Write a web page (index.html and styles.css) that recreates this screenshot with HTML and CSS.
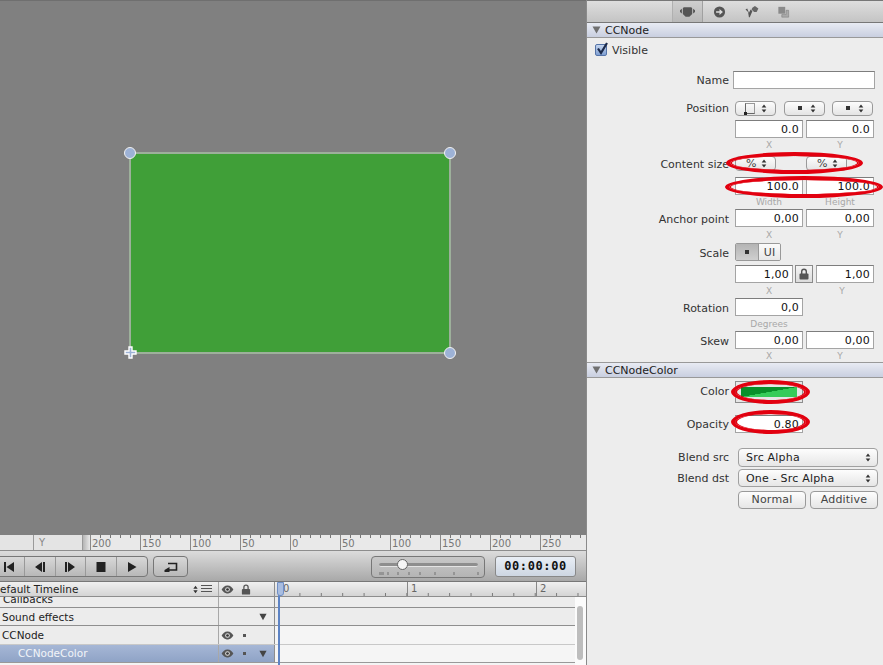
FILE: index.html
```html
<!DOCTYPE html>
<html lang="en">
<head>
<meta charset="utf-8">
<title>CCNodeColor</title>
<link rel="stylesheet" href="styles.css">
</head>
<body>
<svg class="defs" width="0" height="0" aria-hidden="true">
  <symbol id="updown" viewBox="0 0 6 10"><path d="M3 0.5 5.6 4H0.4zM3 9.5 0.4 6h5.2z" fill="#333"/></symbol>
  <symbol id="eye" viewBox="0 0 14 10"><path d="M0.5 5C3 1.2 5 .6 7 .6S11 1.2 13.5 5C11 8.8 9 9.4 7 9.4S3 8.8.5 5z" fill="#555"/><circle cx="7" cy="5" r="2.6" fill="#ddd"/><circle cx="7" cy="5" r="1.5" fill="#333"/></symbol>
  <symbol id="lock" viewBox="0 0 10 12"><path d="M2 6V3.6a3 3 0 0 1 6 0V6H6.6V3.6a1.6 1.6 0 0 0-3.2 0V6z" fill="#555"/><rect x="0.5" y="5.5" width="9" height="6" rx="1" fill="#555"/></symbol>
  <symbol id="tri" viewBox="0 0 10 9"><path d="M0.5 0.5h9L5 8.5z" fill="currentColor"/></symbol>
</svg>
<div class="app">
  <main class="left">
    <section class="canvas">
      <div class="node">
        <span class="handle tl"></span>
        <span class="handle tr"></span>
        <span class="handle br"></span>
        <svg class="handle-move" viewBox="0 0 13 13"><path d="M5 1h3v4h4v3H8v4H5V8H1V5h4z" fill="#9db2d6" stroke="#fff" stroke-width="1.4"/></svg>
      </div>
    </section>

    <div class="ruler">
      <div class="ruler-lead"></div>
      <div class="ruler-y">Y</div>
      <div class="ruler-shade"></div>
      <div class="ruler-cell">200</div>
      <div class="ruler-cell">150</div>
      <div class="ruler-cell">100</div>
      <div class="ruler-cell">50</div>
      <div class="ruler-cell">0</div>
      <div class="ruler-cell">50</div>
      <div class="ruler-cell">100</div>
      <div class="ruler-cell">150</div>
      <div class="ruler-cell">200</div>
      <div class="ruler-cell">250</div>
    </div>

    <div class="transport">
      <div class="btn-group">
        <button class="tbtn first"><svg viewBox="0 0 12 10" class="ti"><path d="M1 0h2v10H1zM11 0v10L3.500 5z"/></svg></button>
        <button class="tbtn"><svg viewBox="0 0 12 10" class="ti"><path d="M9 0h2v10H9zM8 0v10L1 5z"/></svg></button>
        <button class="tbtn"><svg viewBox="0 0 12 10" class="ti"><path d="M1 0h2v10H1zM4 0v10L11 5z"/></svg></button>
        <button class="tbtn"><svg viewBox="0 0 12 10" class="ti"><path d="M1.500 0h9v10h-9z"/></svg></button>
        <button class="tbtn last"><svg viewBox="0 0 12 10" class="ti"><path d="M2 0v10l8.500-5z"/></svg></button>
      </div>
      <button class="loop"><svg viewBox="0 0 14 10" class="loop-icon"><path d="M4 1.500h8.500V8H5" fill="none" stroke="#222" stroke-width="1.600"/><path d="M0.500 8 5.500 5v5.500H.5z" fill="#222"/></svg></button>
      <div class="slider">
        <div class="slider-track"></div>
        <div class="slider-knob"></div>
        <svg class="slider-ticks" viewBox="0 0 100 4"><path d="M0 0v3M2 0v3M4 0v3M9 0v3M19 0v3M30 0v3M41 0v3M56 0v3M75 0v3M99 0v3" stroke="#555" stroke-width=".7"/></svg>
      </div>
      <div class="timer">00:00:00</div>
    </div>

    <section class="timeline">
      <div class="tl-head">
        <div class="tl-name">
          <span class="tl-title">Default Timeline</span>
          <svg class="tl-up"><use href="#updown"/></svg>
          <span class="tl-lines"></span>
        </div>
        <div class="tl-icons">
          <svg class="eye"><use href="#eye"/></svg>
          <svg class="lockicon"><use href="#lock"/></svg>
        </div>
        <div class="tl-ruler">
          <span class="tl-sec zero">0</span>
          <span class="tl-sec">1</span>
          <span class="tl-sec">2</span>
        </div>
      </div>
      <div class="tl-body">
        <div class="tl-row r-callbacks">
          <div class="tl-name"><span class="clip">Callbacks</span></div><div class="tl-icons"></div><div class="tl-track"></div>
        </div>
        <div class="tl-row r-sound">
          <div class="tl-name">Sound effects</div>
          <div class="tl-icons"><svg class="tri second"><use href="#tri"/></svg></div>
          <div class="tl-track"></div>
        </div>
        <div class="tl-row r-node">
          <div class="tl-name">CCNode</div>
          <div class="tl-icons"><svg class="eye"><use href="#eye"/></svg><span class="dot"></span></div>
          <div class="tl-track light"></div>
        </div>
        <div class="tl-row r-sel">
          <div class="tl-name sel-name">CCNodeColor</div>
          <div class="tl-icons sel-icons"><svg class="eye"><use href="#eye"/></svg><span class="dot"></span><svg class="tri second"><use href="#tri"/></svg></div>
          <div class="tl-track light"></div>
        </div>
      </div>
      <div class="playhead"></div>
      <div class="scrollbar"><span class="thumb"></span></div>
    </section>
  </main>

  <aside class="panel">
    <div class="tabs">
      <span class="tab active"><svg viewBox="0 0 16 12" class="tabi"><path d="M4 1h8l1 1v6l-3 3H6L3 8V2zM0 4l2-1.500v5L0 6zM16 4l-2-1.500v5L16 6z" fill="#555"/></svg></span>
      <span class="tab"><svg viewBox="0 0 14 14" class="tabi"><circle cx="7" cy="7" r="6.500" fill="#555"/><path d="M3 6h4V3.500L11 7l-4 3.500V8H3z" fill="#ddd"/></svg></span>
      <span class="tab"><svg viewBox="0 0 16 14" class="tabi"><path d="M1 4l3 3 1 6h1L9 6 7 4 5 8 3 3z" fill="#555"/><path d="M9 2l3-2 4 3-2 4-3 0-3-3z" fill="#666"/></svg></span>
      <span class="tab"><svg viewBox="0 0 14 14" class="tabi"><rect x="1" y="1" width="8" height="8" fill="#8a8a8a"/><path d="M10 5h3v8H5v-3h5z" fill="#aaa" stroke="#777" stroke-width=".6"/></svg></span>
    </div>

    <h2 class="sec-head"><svg class="sec-tri"><use href="#tri"/></svg><span class="sec-text">CCNode</span></h2>
    <label class="visible"><span class="checkbox"><svg viewBox="0 0 14 14"><path d="M3 6.500 6 11 12 1" fill="none" stroke="#1c2a4a" stroke-width="2.200"/></svg></span>Visible</label>

    <div class="row name-row mt9"><span class="lab">Name</span><span class="inp name-inp"></span></div>

    <div class="row h16 mt11"><span class="lab">Position</span>
      <div class="sels">
        <span class="sel w41"><span class="corner"></span><svg class="ud"><use href="#updown"/></svg></span>
        <span class="sel w41"><span class="sq"></span><svg class="ud"><use href="#updown"/></svg></span>
        <span class="sel w41"><span class="sq"></span><svg class="ud"><use href="#updown"/></svg></span>
      </div>
    </div>
    <div class="row mt4"><span class="lab"></span><span class="inp">0.0</span><span class="inp">0.0</span></div>
    <div class="caps mt1"><span>X</span><span>Y</span></div>

    <div class="row h15 mt5"><span class="lab dn">Content size</span>
      <div class="sels wide">
        <span class="sel w41"><span class="pct">%</span><svg class="ud"><use href="#updown"/></svg></span>
        <span class="sel w41"><span class="pct">%</span><svg class="ud"><use href="#updown"/></svg></span>
      </div>
    </div>
    <div class="row mt6"><span class="lab"></span><span class="inp">100.0</span><span class="inp">100.0</span></div>
    <div class="caps mt1"><span>Width</span><span>Height</span></div>

    <div class="row mt1"><span class="lab dn">Anchor point</span><span class="inp">0,00</span><span class="inp">0,00</span></div>
    <div class="caps mt2"><span>X</span><span>Y</span></div>

    <div class="row mt2"><span class="lab dn">Scale</span>
      <div class="seg"><span class="seg-a"><span class="sq"></span></span><span class="seg-b">UI</span></div>
    </div>
    <div class="row mt4"><span class="lab"></span><span class="inp w58">1,00</span>
      <span class="lockbtn"><svg><use href="#lock"/></svg></span>
      <span class="inp w58">1,00</span></div>
    <div class="caps scale-caps mt2"><span>X</span><span>Y</span></div>

    <div class="row mt1"><span class="lab dn">Rotation</span><span class="inp">0,0</span></div>
    <div class="caps mt2"><span>Degrees</span></div>

    <div class="row mt1"><span class="lab dn">Skew</span><span class="inp">0,00</span><span class="inp">0,00</span></div>
    <div class="caps mt1"><span>X</span><span>Y</span></div>

    <h2 class="sec-head second"><svg class="sec-tri"><use href="#tri"/></svg><span class="sec-text">CCNodeColor</span></h2>

    <div class="row h22 mt3"><span class="lab up">Color</span><span class="well"><span class="swatch"></span></span></div>
    <div class="row mt12"><span class="lab">Opacity</span><span class="inp">0.80</span></div>

    <div class="row h19 mt15"><span class="lab narrow">Blend src</span><span class="combo">Src Alpha<svg class="ud"><use href="#updown"/></svg></span></div>
    <div class="row mt2"><span class="lab narrow">Blend dst</span><span class="combo">One - Src Alpha<svg class="ud"><use href="#updown"/></svg></span></div>
    <div class="row mt4 btns"><button class="pbtn">Normal</button><button class="pbtn">Additive</button></div>

    <span class="ring ring1"></span>
    <span class="ring ring2"></span>
    <span class="ring ring3"></span>
    <span class="ring ring4"></span>
  </aside>
</div>
</body>
</html>
```
FILE: styles.css
```css
* { box-sizing: border-box; }
html, body { margin: 0; padding: 0; height: 100%; overflow: hidden; }
body { font: 11px/1 "DejaVu Sans", sans-serif; color: #333; background: #808080; }
.defs { position: absolute; }
button { font: inherit; color: inherit; padding: 0; margin: 0; }

.app { display: flex; width: 883px; height: 665px; overflow: hidden; }
.left { width: 586px; flex: none; display: flex; flex-direction: column; overflow: hidden; }

/* canvas */
.canvas { position: relative; height: 535px; flex: none; background: #808080; border-top: 1px solid #6f6f6f; }
.node { position: absolute; left: 129px; top: 151px; width: 322px; height: 202px; background: #409f38; border: 2px solid #9db09b; }
.handle { position: absolute; width: 12px; height: 12px; border-radius: 50%; background: #9db2d6; border: 1.5px solid #f2f2f2; }
.tl { left: -7px; top: -7px; }
.tr { right: -7px; top: -7px; }
.br { right: -7px; bottom: -7px; }
.handle-move { position: absolute; left: -7px; bottom: -7px; width: 13px; height: 13px; }

/* ruler */
.ruler { display: flex; height: 16px; flex: none; background: #e9e9e9; border-bottom: 1px solid #8d8d8d; overflow: hidden; color: #777; font-size: 10px; }
.ruler-lead { width: 33px; flex: none; background: #e4e4e4; }
.ruler-y { width: 50px; flex: none; border-left: 1px solid #9a9a9a; border-right: 1px solid #9a9a9a; background: #e4e4e4; padding: 3px 0 0 5px; color: #888; }
.ruler-shade { width: 7px; flex: none; background: linear-gradient(90deg, #b5b5b5, #e9e9e9); }
.ruler-cell { width: 50px; flex: none; padding: 4px 0 0 1px; border-left: 1px solid #8a8a8a; background: repeating-linear-gradient(90deg, transparent 0 9px, #777 9px 10px) 0 0 / 100% 3px no-repeat; }

/* transport */
.transport { display: flex; align-items: flex-start; height: 31px; flex: none; padding-top: 5px; background: linear-gradient(#dcdcdc, #a8a8a8); border-bottom: 1px solid #777; position: relative; }
.btn-group { display: flex; width: 155px; height: 21px; margin-left: -7px; border: 1px solid #777; border-radius: 4px; background: linear-gradient(#d8d8d8, #b8b8b8); flex: none; }
.tbtn { flex: 1; border: 0; border-right: 1px solid #999; background: none; display: flex; align-items: center; justify-content: center; }
.tbtn.last { border-right: 0; }
.ti { width: 12px; height: 10px; fill: #222; }
.loop { width: 35px; height: 21px; margin-left: 5px; border: 1px solid #777; border-radius: 4px; background: linear-gradient(#d8d8d8, #b8b8b8); display: flex; align-items: center; justify-content: center; flex: none; }
.loop-icon { width: 14px; height: 10px; }
.slider { position: relative; width: 114px; height: 22px; margin-left: 183px; border: 1px solid #777; border-radius: 4px; background: linear-gradient(#c8c8c8, #b4b4b4); flex: none; }
.slider-track { position: absolute; left: 7px; right: 6px; top: 6px; height: 4px; border-radius: 2px; background: #8e8e8e; border-bottom: 1px solid #e4e4e4; }
.slider-knob { position: absolute; left: 25px; top: 2px; width: 11px; height: 11px; border-radius: 50%; background: #f6f6f6; border: 1px solid #666; }
.slider-ticks { position: absolute; left: 7px; top: 15px; width: 100px; height: 4px; }
.timer { width: 81px; height: 21px; margin-left: 10px; flex: none; border: 1px solid #888; border-radius: 3px; background: linear-gradient(#e9eef5, #cdd6e2); font: bold 12px/19px "DejaVu Sans Mono", monospace; letter-spacing: .6px; color: #111; text-align: center; }

/* timeline */
.timeline { position: relative; flex: 1; background: #f4f4f4; overflow: hidden; }
.tl-head { display: flex; height: 15px; background: linear-gradient(#f0f0f0, #d4d4d4); border-bottom: 1px solid #8d8d8d; }
.tl-name { width: 218px; flex: none; display: flex; align-items: center; padding-left: 2px; color: #222; font-size: 10.5px; white-space: nowrap; }
.tl-head .tl-name { padding-left: 0; }
.tl-title { margin-left: -8px; flex: 1; }
.tl-up { width: 5px; height: 9px; margin-right: 3px; }
.tl-lines { width: 11px; height: 8px; margin-right: 6px; background: repeating-linear-gradient(#555 0 1px, transparent 1px 3px); }
.tl-icons { width: 57px; flex: none; display: flex; align-items: center; border-left: 1px solid #a8a8a8; border-right: 1px solid #8d8d8d; padding-left: 2px; position: relative; }
.eye { width: 13px; height: 9px; }
.lockicon { width: 10px; height: 11px; margin-left: 7px; }
.tl-ruler { flex: 1; display: flex; font-size: 10px; color: #666; background: linear-gradient(90deg, transparent 20.4px, #777 20.4px) 4px 100% / 21.4px 3px repeat-x; }
.tl-sec { width: 129px; flex: none; padding: 2px 0 0 3px; border-left: 1px solid #888; }
.tl-sec.zero { width: 132px; border-left: 0; padding-left: 8px; }
.tl-row { display: flex; border-bottom: 1px solid #8f8f8f; background: #ececec; }
.r-callbacks { height: 11px; overflow: hidden; }
.clip { margin-top: -5px; padding-left: 1px; }
.r-callbacks .tl-name { overflow: hidden; height: 10px; }
.r-sound { height: 18px; }
.r-sound .tl-name { padding-top: 1px; }
.r-node { height: 19px; border-bottom-color: #c8c8c8; }
.r-sel { height: 18px; background: linear-gradient(#a6b7d6, #8fa3c6); border-bottom-color: #999; }
.tl-track { flex: 1; background: #ececec; }
.tl-track.light { background: #f5f5f5; }
.tri { width: 8px; height: 8px; color: #444; }
.tri.second { position: absolute; right: 7px; top: 5px; }
.dot { width: 3px; height: 3px; margin-left: 9px; background: #555; }
.sel-name { color: #f2f4f8; padding-left: 18px; }
.sel-icons { background: none; }
.playhead { position: absolute; left: 278px; top: 0; width: 2px; height: 100%; background: #5d83c4; }
.playhead::before { content: ""; position: absolute; left: -1px; top: 0; width: 5px; height: 12px; border-radius: 0 0 3px 3px; background: #a9bde0; border: 1px solid #6f8fc6; }
.scrollbar { position: absolute; right: 0; top: 15px; bottom: 0; width: 11px; background: #fbfbfb; }
.thumb { position: absolute; left: 2px; top: 9px; width: 6px; height: 54px; border-radius: 3px; background: #bdbdbd; }

/* panel */
.panel { position: relative; width: 297px; flex: none; background: #ededed; border-left: 1px solid #8a8a8a; overflow: hidden; }
.tabs { display: flex; height: 23px; padding-left: 85px; background: linear-gradient(#dedede, #c4c4c4); border-top: 1px solid #777; border-bottom: 1px solid #777; }
.tab { width: 32px; display: flex; align-items: center; justify-content: center; }
.tab.active { width: 31px; background: linear-gradient(#cfcfcf, #b8b8b8); border-left: 1px solid #b0b0b0; border-right: 1px solid #a0a0a0; }
.tabi { width: 15px; height: 12px; }
.sec-head { display: flex; align-items: center; gap: 4px; height: 15px; margin: 0; padding-left: 5px; font-size: 11px; font-weight: 400; color: #222; background: linear-gradient(#e8ebf3, #c9cfe0); border-bottom: 1px solid #999; }
.sec-head.second { height: 16px; border-top: 1px solid #999; }
.sec-text { padding-top: 1px; }
.sec-tri { width: 9px; height: 8px; color: #707070; }
.visible { display: flex; align-items: center; gap: 5px; height: 24px; padding-left: 8px; color: #333; }
.checkbox { width: 12px; height: 12px; border: 1px solid #5574a8; border-radius: 2px; background: linear-gradient(#c5d6ef, #7f9fd2); position: relative; }
.checkbox svg { position: absolute; left: -1px; top: -3px; width: 14px; height: 14px; }

.row { display: flex; align-items: center; height: 18px; gap: 3px; }
.h15 { height: 15px; }
.h16 { height: 16px; }
.h19 { height: 19px; }
.h22 { height: 22px; }
.mt1 { margin-top: 1px; }
.mt2 { margin-top: 2px; }
.mt3 { margin-top: 3px; }
.mt4 { margin-top: 4px; }
.mt5 { margin-top: 5px; }
.mt6 { margin-top: 6px; }
.mt9 { margin-top: 9px; }
.mt11 { margin-top: 11px; }
.mt12 { margin-top: 12px; }
.mt15 { margin-top: 15px; }

.lab { width: 142px; margin-right: 3px; text-align: right; white-space: nowrap; flex: none; }
.lab.dn { padding-top: 2px; }
.lab.up { padding-bottom: 2px; }
.inp { width: 68px; height: 18px; flex: none; padding-right: 3px; background: #fff; border: 1px solid #a4a4a4; border-top-color: #7d7d7d; text-align: right; font-size: 11px; line-height: 18px; color: #111; letter-spacing: .2px; }
.w58 { width: 58px; }
.name-row .lab { margin-right: 1px; }
.name-inp { width: 142px; }
.sels { display: flex; gap: 7.5px; }
.sels.wide { gap: 30px; }
.sel { position: relative; display: flex; align-items: center; height: 100%; min-height: 15px; border: 1px solid #9a9a9a; border-radius: 4px; background: linear-gradient(#fdfdfd, #e4e4e4); }
.w41 { width: 41px; }
.ud { position: absolute; right: 8px; top: 50%; width: 6px; height: 9px; margin-top: -4.5px; }
.sq { width: 4px; height: 4px; background: #333; }
.sel .sq { margin-left: 13px; }
.corner { width: 10px; height: 11px; margin-left: 9px; border: 1px solid #666; border-top-color: #999; border-right-color: #999; position: relative; }
.corner::after { content: ""; position: absolute; left: -2px; bottom: -2px; width: 3px; height: 3px; background: #222; }
.pct { margin-left: 10px; color: #444; }
.caps { display: flex; gap: 3px; height: 12px; padding-left: 148px; font-size: 9px; line-height: 12px; color: #a8a8a8; }
.caps span { width: 68px; text-align: center; }
.scale-caps { gap: 10px; }
.scale-caps span + span { width: 58px; }
.seg { display: flex; width: 46px; height: 18px; border: 1px solid #999; border-radius: 2px; overflow: hidden; }
.seg-a { width: 23px; display: flex; align-items: center; justify-content: center; background: linear-gradient(#b4b4b4, #cfcfcf); border-right: 1px solid #999; }
.seg-b { flex: 1; display: flex; align-items: center; justify-content: center; background: linear-gradient(#fbfbfb, #e8e8e8); color: #444; }
.lockbtn { width: 18px; height: 18px; margin-left: -1px; border: 1px solid #8a8a8a; background: linear-gradient(#f5f5f5, #dcdcdc); display: flex; align-items: center; justify-content: center; }
.lockbtn svg { width: 10px; height: 12px; }
.well { width: 68px; height: 22px; padding: 5px; border: 1px solid #8e8e8e; background: #e6e6e6; flex: none; }
.swatch { display: block; height: 100%; background: linear-gradient(to bottom right, #08902a 49.5%, #36cc5a 50.5%); }
.narrow { margin-right: 6px; }
.combo { position: relative; width: 140px; height: 100%; padding-left: 7px; border: 1px solid #a0a0a0; border-radius: 4px; background: linear-gradient(#fdfdfd, #e6e6e6); display: flex; align-items: center; color: #222; letter-spacing: .2px; font-size: 11px; }
.combo .ud { right: 6px; }
.btns { padding-left: 151px; gap: 4px; }
.pbtn { width: 68px; height: 18px; padding-bottom: 2px; border: 1px solid #9a9a9a; border-radius: 4px; background: linear-gradient(#fdfdfd, #e6e6e6); color: #444; letter-spacing: .2px; }

/* annotations */
.ring { position: absolute; border: 4px solid #e2000f; border-radius: 50%; pointer-events: none; box-shadow: inset 2px 0 0 #e2000f, inset -2px 0 0 #e2000f, 0 0 1px rgba(255,255,255,.6); }
.ring1 { left: 139px; top: 152px; width: 137px; height: 22px; }
.ring2 { left: 138px; top: 176px; width: 158px; height: 22px; }
.ring3 { left: 144px; top: 380px; width: 79px; height: 24px; }
.ring4 { left: 144px; top: 410px; width: 79px; height: 24px; }
```
